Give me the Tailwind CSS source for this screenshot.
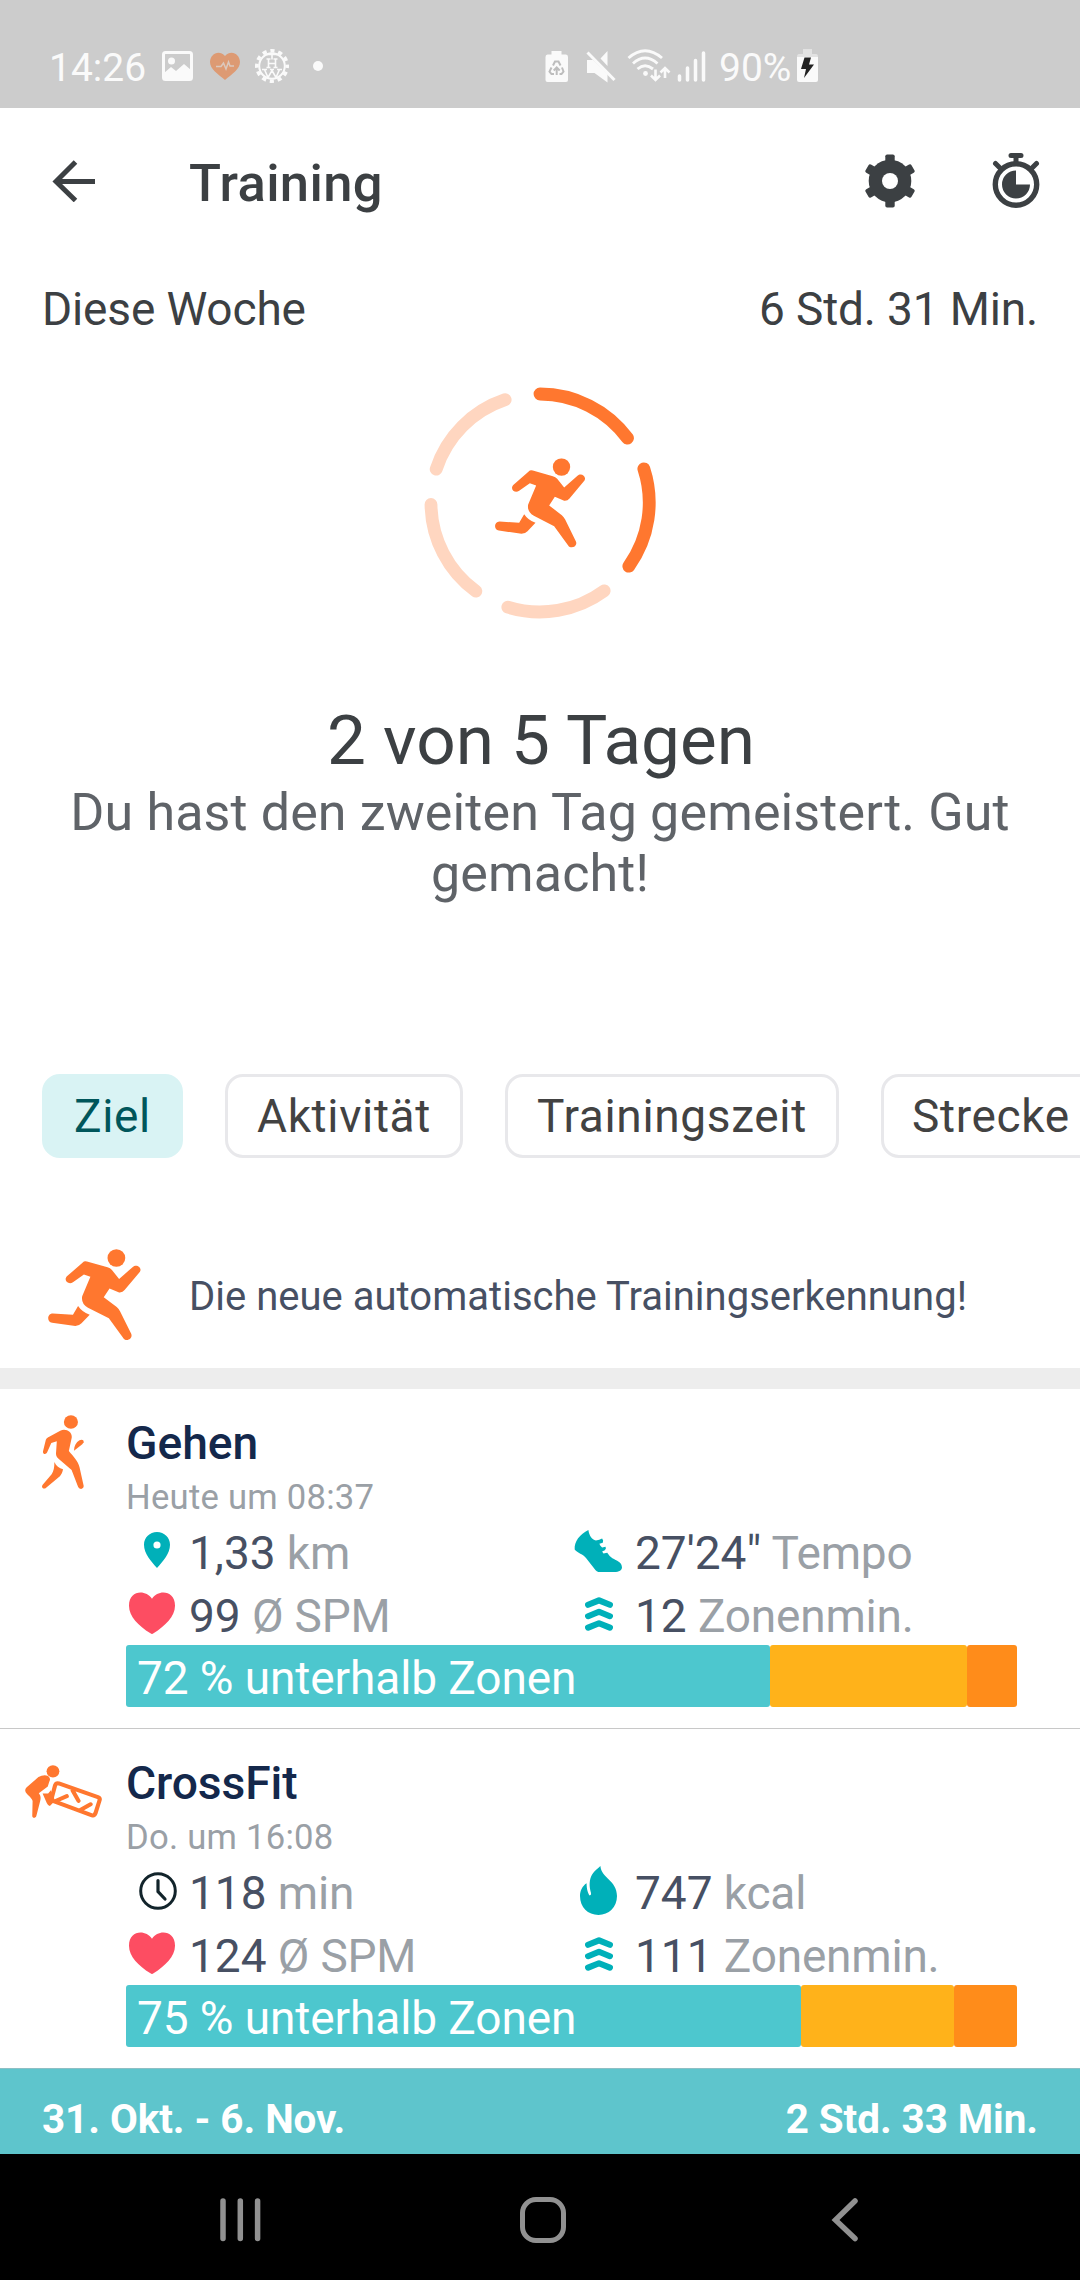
<!DOCTYPE html>
<html lang="de">
<head>
<meta charset="utf-8">
<title>Training</title>
<script src="https://cdn.jsdelivr.net/npm/@tailwindcss/browser@4"></script>
</head>
<body class="w-[1080px] h-[2280px] overflow-hidden bg-white font-['Roboto',sans-serif] text-[#3c4043]">

<svg class="hidden">
  <symbol id="runner" viewBox="256 263 272 268" preserveAspectRatio="none">
    <circle cx="456" cy="289.500" r="26"/>
    <path d="M361 300Q365 298 370 300L430 317Q438 319 443 325L464 351L504 316C514 306 532 317 525 330L480 384Q474 392 464 391L436 379L419 405L457 434Q463 439 467 447L499 512C506 526 485 539 476 525L434 467L373 436Q352 424 356 402L380 345L361 338L329 361C315 370 299 354 313 342Z"/>
    <path d="M344 431Q355 448 378 457L354 482Q346 490 336 490L268 480C252 478 253 453 270 453L329 457Z"/>
  </symbol>
  <symbol id="heart" viewBox="375 637 133 126" preserveAspectRatio="none">
    <path d="M441.500 657C460 628 508 632 508 678C508 710 480 738 446 761Q441.500 765 437 761C402 738 375 710 375 678C375 632 422 628 441.500 657Z"/>
  </symbol>
  <symbol id="zones" viewBox="130 650 80 101" preserveAspectRatio="none">
    <path d="M139 673L170 660L201 673M139 707L170 694L201 707M139 741L170 728L201 741" fill="none" stroke="currentColor" stroke-width="18" stroke-linecap="round" stroke-linejoin="round"/>
  </symbol>
</svg>

<!-- Status bar -->
<div class="h-[108px] bg-[#cccccc] text-[#fafafa] flex items-start pt-12">
  <div class="ml-[49px] w-[97px] text-[39px] leading-[40px] whitespace-nowrap">14:26</div>
  <svg class="ml-[14px] size-9" viewBox="160 48 36 36"><rect x="163.500" y="52.500" width="28" height="27" rx="2" fill="none" stroke="currentColor" stroke-width="3"/><circle cx="171.500" cy="61" r="3.500" fill="currentColor"/><path d="M164 73L171 67L176 71L184 64L191 70V79H164Z" fill="currentColor"/></svg>
  <svg class="ml-[11px] size-9" viewBox="207 48 36 36"><path d="M225 56C231 49 240 54 240 62C240 69 232 74 225 80C218 74 210 69 210 62C210 54 219 49 225 56Z" fill="#dd9a73"/><path d="M216 66.500H221L223.500 63L226 69L228.500 62L230 66H234" fill="none" stroke="#dcc9be" stroke-width="1.500"/></svg>
  <svg class="ml-[11px] size-9" viewBox="253.500 48.500 36 36" fill="none" stroke="currentColor"><circle cx="271.500" cy="66.500" r="12.800" stroke-width="2"/><circle cx="271.500" cy="66.500" r="15.200" stroke-width="3.600" stroke-dasharray="4.200 3.759" stroke-dashoffset="2.100"/><path d="M266.500 56V55H276.500V56M271.500 55V60M268 59.500V68M275 59.500V68M266 59.500H270M273 59.500H277M268 64H275M266 68H270M273 68H277M264 70L267.500 78L271.500 71L275.500 78L279 70M261.500 70H266.500M269.500 70H273.500M276.500 70H281.500" stroke-width="1.600"/></svg>
  <div class="ml-[23px] mt-[13px] size-[10px] rounded-full bg-[#fafafa]"></div>
  <svg class="ml-[220px] w-[26px] h-9" viewBox="543 48 26 36"><path d="M551.500 51H561.500V54.500H566Q568 54.500 568 57V80Q568 82 566 82H547.500Q545.500 82 545.500 80V57Q545.500 54.500 547.500 54.500H551.500Z" fill="currentColor"/><path d="M553 65.500L555 61.500H558.500L560.500 65.500M562 67.500L563.500 71.500L561.500 74H559.500M554 74H551.500L549.500 71.500L551.500 67.500M556.700 75V68.500M553.700 70.500L556.700 67.500L559.700 70.500" fill="none" stroke="#bdbdbd" stroke-width="2"/></svg>
  <svg class="ml-[16px] w-8 h-9" viewBox="585 48 32 36" fill="currentColor"><path d="M587 60H593L607.500 74V82.500L594.500 73H587ZM607.500 51V66L600.500 58.500Z"/><path d="M587.500 52.500L614.500 80" stroke="currentColor" stroke-width="3"/></svg>
  <svg class="ml-[9px] w-[46px] h-9" viewBox="626 48 46 36" fill="none" stroke="currentColor" stroke-width="2.900"><path d="M628.500 58Q645 43.500 662 58M633 63.500Q645 52.500 657.500 63.500M637.500 69Q645 62.500 653 69"/><circle cx="645.500" cy="73.500" r="2.400" fill="currentColor" stroke="none"/><path d="M655.500 69.500V79M651 75.500L655.500 80L660 75.500M665 78V69M660.500 72.500L665 68L669.500 72.500" stroke-width="2.600"/></svg>
  <svg class="ml-[4px] w-[32px] h-9" viewBox="676 48 32 36" fill="none" stroke="currentColor" stroke-width="3.500" stroke-linecap="round"><path d="M679.500 76V80M687.500 68V80M695.500 60.500V80M703.500 53V80"/></svg>
  <div class="ml-[11px] w-[74px] text-[39px] leading-[40px] whitespace-nowrap">90%</div>
  <svg class="ml-[2px] w-[26px] h-9" viewBox="795 48 26 36"><path d="M803 49H812V54H803ZM797 57Q797 54 799 54H816Q818 54 818 57Z" fill="#e2e2e2"/><path d="M797 57H818V80Q818 82 816 82H799Q797 82 797 80Z" fill="#fafafa"/><path d="M804.500 57.500H811L809 64.500H814L804 78L806 69H801Z" fill="#222"/></svg>
</div>

<!-- App bar -->
<header class="h-[147px] flex items-center pl-[52px] pr-[40px] pb-[2px]">
  <svg class="w-11 h-[42px]" viewBox="0 0 44 42" fill="none" stroke="#3c4043" stroke-width="5"><path d="M43 21.500H5M23.500 2L4 21.500L23.500 40.500"/></svg>
  <h1 class="ml-[93px] mt-[5px] text-[52.5px] leading-[60px] tracking-[0.35px] font-medium">Training</h1>
  <svg class="ml-auto w-[50px] h-[54px]" viewBox="-25 -27 50 54" fill="#3c4043"><g id="tooth"><rect x="-4.700" y="-26.500" width="9.400" height="53" rx="1.800"/></g><use href="#tooth" transform="rotate(60)"/><use href="#tooth" transform="rotate(-60)"/><circle r="21.300"/><circle r="8" fill="#fff"/></svg>
  <svg class="ml-[77px] w-[48px] h-[56px]" viewBox="991.500 153 48 56" fill="none" stroke="#3c4043"><circle cx="1015.500" cy="184.500" r="20.700" stroke-width="5.400"/><path d="M1015.500 157V163M1010.500 155.500H1020.500" stroke-width="5" stroke-linecap="round"/><path d="M995 163.500L1000.500 169M1036 163.500L1030.500 169" stroke-width="5" stroke-linecap="round"/><path d="M1015.500 184.500V170.500A14 14 0 1 0 1029.500 184.500Z" fill="#3c4043" stroke="none"/></svg>
</header>

<main class="h-[1899px] overflow-hidden">
  <section>
    <div class="mt-[24px] px-[42px] flex justify-between text-[46px] leading-[60px] tracking-[-0.15px]">
      <span>Diese Woche</span><span>6 Std. 31 Min.</span>
    </div>
    <div class="mt-[47px] flex justify-center">
      <svg class="size-[234px]" viewBox="40.500 46.500 702 702" fill="none" stroke-width="38.500" stroke-linecap="round">
        <path d="M391.500 70.500A327 327 0 0 1 654 203M703 295A327 327 0 0 1 658 587" stroke="#ff772f"/>
        <path d="M584 661A327 327 0 0 1 295 710M199 662A327 327 0 0 1 64.500 402M80 296A327 327 0 0 1 287 87.500" stroke="#ffd6c0"/>
        <use href="#runner" x="256" y="263" width="272" height="268" fill="#ff772f"/>
      </svg>
    </div>
    <h2 class="mt-[81px] pl-[2px] text-center text-[69.3px] leading-[80px]">2 von 5 Tagen</h2>
    <p class="mt-px text-center text-[52px] leading-[61px] tracking-[0.13px] text-[#5f6368]">Du hast den zweiten Tag gemeistert. Gut<br>gemacht!</p>
  </section>

  <nav class="mt-[170px] ml-[42px] h-[84px] flex gap-[42px] text-[46px] leading-[78px] tracking-[0.65px] text-[#424242] whitespace-nowrap">
    <div class="w-[141px] shrink-0 text-center rounded-[18px] border-[3px] border-[#d9f3f4] bg-[#d9f3f4] text-[#00565b]">Ziel</div>
    <div class="w-[238px] shrink-0 text-center rounded-[18px] border-[3px] border-[#e8e8eb]">Aktivität</div>
    <div class="w-[334px] shrink-0 text-center rounded-[18px] border-[3px] border-[#e8e8eb]">Trainingszeit</div>
    <div class="w-[220px] shrink-0 text-center rounded-[18px] border-[3px] border-[#e8e8eb]">Strecke</div>
  </nav>

  <div class="mt-[63px] h-[147px] pl-[48px] flex items-center">
    <svg class="w-[93px] h-[91px]" fill="#ff772f"><use href="#runner" width="93" height="91"/></svg>
    <p class="ml-[48px] mt-[5px] text-[40px] leading-[50px] tracking-[0.02px] text-[#475063]">Die neue automatische Trainingserkennung!</p>
  </div>
  <div class="h-[21px] bg-[#ededed]"></div>

  <!-- Exercise: Gehen -->
  <article class="h-[340px] border-b border-[#c8c8c8] flex">
    <div class="w-[126px] shrink-0 pl-[42px] pt-[26px]">
      <svg class="w-[42px] h-[74px]" viewBox="122 105 122 222" preserveAspectRatio="none" fill="#ff772f">
        <circle cx="206" cy="126" r="20.500"/>
        <path d="M186 149C200 149 211 160 208 175L200 213C212 228 227 243 231 262L243 317C244 328 232 330 227 321L208 270L170 236C163 230 162 225 163 215L165 184L149 189L137 217C133 226 123 222 125 214L133 180C135 174 139 172 143 170L175 152Q181 149 186 149Z"/>
        <path d="M158 246C163 258 172 264 183 268C182 276 178 284 174 289L134 323C127 330 118 322 124 314L150 283C156 273 158 262 158 246Z"/>
        <path d="M243 187C244 179 237 178 231 181C221 187 215 198 215 212L239 193Z"/>
      </svg>
    </div>
    <div class="w-[891px]">
      <h3 class="mt-[27px] text-[46.2px] leading-[54px] font-medium text-[#14284b]">Gehen</h3>
      <div class="mt-[7px] text-[34.65px] leading-[41px] tracking-[0.25px] text-[#9aa0a6]">Heute um 08:37</div>
      <div class="mt-[7px] grid grid-cols-[63px_373px_73px_1fr] gap-y-[6px] text-[46px] leading-[57px] tracking-[-0.2px] text-[#9aa0a6]">
        <div class="flex items-center justify-center pr-px pb-[7px]"><svg class="w-[26px] h-9" viewBox="419.500 457 76 108" preserveAspectRatio="none"><path d="M457.500 457C479 457 495.500 474 495.500 495C495.500 522 475 544 457.500 565C440 544 419.500 522 419.500 495C419.500 474 436 457 457.500 457Z" fill="#00b0b9"/><circle cx="457.500" cy="496" r="10.500" fill="#fff"/></svg></div>
        <div><span class="tracking-normal text-[#475063]">1,33</span> km</div>
        <div class="flex items-center justify-center pr-px pb-[6px]"><svg class="w-[48px] h-[42px]" viewBox="98 450 140 125" preserveAspectRatio="none" fill="#00b0b9"><path d="M140 450C142 466 150 479 162 481Q172 480 180 475Q185 480 182 488L172 491Q174 497 180 502L190 500Q193 505 188 510L180 514L184 520L195 518Q202 530 210 534C222 541 238 545 238 562C236 573 225 575 210 575H169Q164 574 161 570L133 533C125 522 108 519 100 508C98 485 115 462 140 450Z"/></svg></div>
        <div><span class="tracking-normal text-[#475063]">27'24"</span> Tempo</div>
        <div class="flex items-center pl-[3px] pb-[7px]"><svg class="w-[46px] h-[42px]" fill="#fd4d62"><use href="#heart" width="46" height="42"/></svg></div>
        <div><span class="tracking-normal text-[#475063]">99</span> Ø SPM</div>
        <div class="flex items-center justify-center pb-[6px] text-[#00b0b9]"><svg class="w-[28px] h-[34px]"><use href="#zones" width="28" height="34"/></svg></div>
        <div><span class="tracking-normal text-[#475063]">12</span> Zonenmin.</div>
      </div>
      <div class="h-[62px] flex text-[46px] leading-[66px] tracking-[-0.1px] text-white">
        <div class="w-[644px] pl-[11px] rounded-[3px] bg-[#4dc7ce]">72 % unterhalb Zonen</div>
        <div class="w-[197px] rounded-[3px] bg-[#ffb21a]"></div>
        <div class="w-[50px] rounded-[3px] bg-[#ff8c1a]"></div>
      </div>
    </div>
  </article>

  <!-- Exercise: CrossFit -->
  <article class="h-[340px] border-b border-[#8dbfc4] flex">
    <div class="w-[126px] shrink-0 pl-[25px] pt-[36px]">
      <svg class="w-[77px] h-[53px]" viewBox="73 137 223 158" preserveAspectRatio="none" fill="#ff772f">
        <circle cx="154" cy="156" r="18.500"/>
        <path d="M134 168C143 168 149 178 143 188L139 201L113 221C119 228 119 236 117 244L106 288C104 296 94 296 94 288L95 244C94 236 82 228 75 218C72 212 74 208 78 203L112 173Q122 167 134 168Z"/>
        <path d="M124 222L140 222L148 212L158 246L145 259Q139 257 136 250Z"/>
        <path d="M151 233L160 198Q163 190 171 192L284 233Q291 236 289 242L277 281Q274 289 267 287L152 243ZM160 245L194 230M211 213L228 244M232 272L263 254" fill="none" stroke="#ff772f" stroke-width="12" stroke-linecap="round" stroke-linejoin="round"/>
      </svg>
    </div>
    <div class="w-[891px]">
      <h3 class="mt-[27px] text-[46.2px] leading-[54px] tracking-[-0.1px] font-medium text-[#14284b]">CrossFit</h3>
      <div class="mt-[7px] text-[34.65px] leading-[41px] tracking-[0.25px] text-[#9aa0a6]">Do. um 16:08</div>
      <div class="mt-[7px] grid grid-cols-[63px_373px_73px_1fr] gap-y-[6px] text-[46px] leading-[57px] tracking-[-0.2px] text-[#9aa0a6]">
        <div class="flex items-center justify-center pb-[6px]"><svg class="size-[38px]" viewBox="0 0 38 38" fill="none" stroke="#12242b" stroke-linecap="round"><circle cx="19" cy="19" r="17.300" stroke-width="3"/><path d="M19 8.500V19.500L26 27" stroke-width="3.200"/></svg></div>
        <div><span class="tracking-normal text-[#475063]">118</span> min</div>
        <div class="flex items-center justify-center pb-[6px]"><svg class="w-[37px] h-[49px]" viewBox="115 438 107 145" preserveAspectRatio="none" fill="#00b0b9"><path d="M174 438C177 475 222 480 222 527C222 560 198 583 168.500 583C138 583 115 560 115 527C115 511 122 497 134 489C134 506 138 520 143 525Q148 525 147 519C141 498 141 478 151 462C157 451 166 446 174 438Z"/></svg></div>
        <div><span class="tracking-normal text-[#475063]">747</span> kcal</div>
        <div class="flex items-center pl-[3px] pb-[7px]"><svg class="w-[46px] h-[42px]" fill="#fd4d62"><use href="#heart" width="46" height="42"/></svg></div>
        <div><span class="tracking-normal text-[#475063]">124</span> Ø SPM</div>
        <div class="flex items-center justify-center pb-[6px] text-[#00b0b9]"><svg class="w-[28px] h-[34px]"><use href="#zones" width="28" height="34"/></svg></div>
        <div><span class="tracking-normal text-[#475063]">111</span> Zonenmin.</div>
      </div>
      <div class="h-[62px] flex text-[46px] leading-[66px] tracking-[-0.1px] text-white">
        <div class="w-[675px] pl-[11px] rounded-[3px] bg-[#4dc7ce]">75 % unterhalb Zonen</div>
        <div class="w-[153px] rounded-[3px] bg-[#ffb21a]"></div>
        <div class="w-[63px] rounded-[3px] bg-[#ff8c1a]"></div>
      </div>
    </div>
  </article>

  <div class="h-[85px] px-[42px] bg-[#5ec5cc] flex justify-between text-[40.4px] leading-[102px] tracking-[-0.05px] font-bold text-white">
    <span>31. Okt. - 6. Nov.</span><span>2 Std. 33 Min.</span>
  </div>
</main>

<!-- System navigation -->
<footer class="h-[126px] bg-black flex items-center pl-[219px] text-[#919191]">
  <svg class="mt-[6px] w-[43px] h-[46px]" viewBox="219 2198 43 46" fill="none" stroke="currentColor" stroke-width="5.500" stroke-linecap="round"><path d="M223 2202V2239.500M240.300 2202V2239.500M257.600 2202V2239.500"/></svg>
  <div class="ml-[258px] mt-[6px] w-[46px] h-[46px] rounded-[16px] border-[5.500px] border-[#919191]"></div>
  <svg class="ml-[264px] mt-[6px] w-[30px] h-[46px]" viewBox="830 2198 30 46" fill="none" stroke="currentColor" stroke-width="5.500" stroke-linecap="round"><path d="M855 2202L835.500 2221L855 2239.500"/></svg>
</footer>
</body>
</html>
